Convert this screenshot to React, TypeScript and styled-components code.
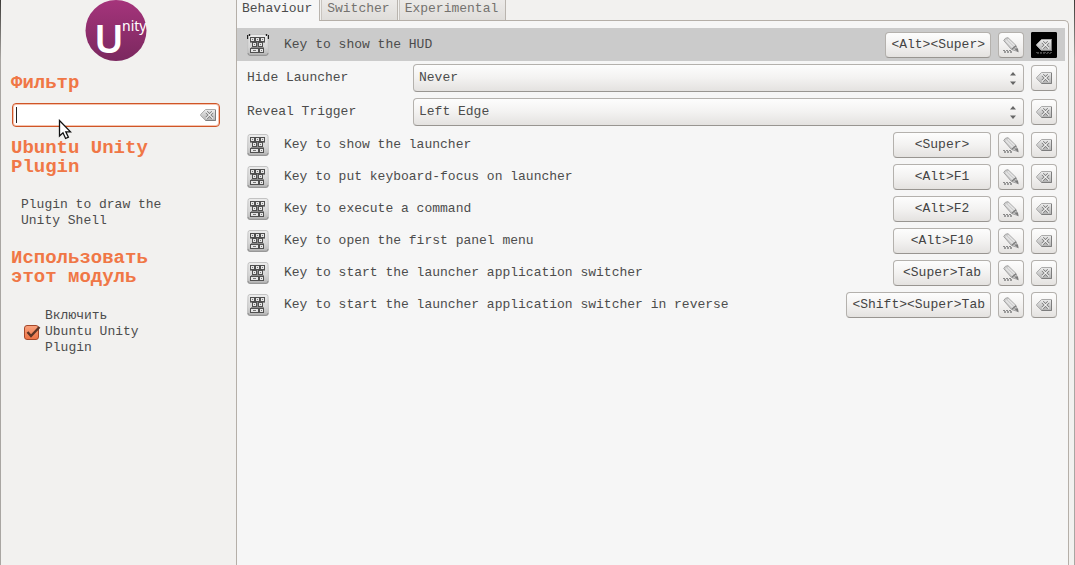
import React, { useState } from "react";
import styled, { createGlobalStyle, css } from "styled-components";

const GlobalStyle = createGlobalStyle`
  * { box-sizing: border-box; }
  html, body { margin: 0; background: #f2f1ef; }
  body, button, input, select {
    font-family: "Liberation Mono", "DejaVu Sans Mono", monospace;
    font-size: 13px;
    line-height: 16px;
    color: #4c4c4c;
  }
`;

const Window = styled.div`
  position: relative;
  display: flex;
  min-height: 100vh;
  border: solid;
  border-width: 0 1px;
  border-image: linear-gradient(#3a3835, #a9a6a2 60px) 1;
  background: #f2f1ef;
  overflow: hidden;
`;

const Sidebar = styled.aside`
  flex: 0 0 235px;
  padding: 0 16px 0 10px;
`;

const Logo = styled.svg`
  display: block;
  margin: 0 auto 13px;
  overflow: visible;
`;

const Heading = styled.h2`
  max-width: 180px;
  margin: 0;
  font-size: 19px;
  line-height: 19px;
  font-weight: bold;
  color: #f07746;
`;

const FilterBox = styled.div`
  display: flex;
  align-items: center;
  height: 24px;
  margin: 10px 0 12px 1px;
  padding: 0 3px;
  border: 1px solid #cf5527;
  border-radius: 4px;
  background: #fff;
  box-shadow: inset 0 0 0 1px #f6c3ae;
`;

const FilterInput = styled.input`
  flex: 1;
  min-width: 0;
  height: 18px;
  padding: 0;
  border: 0;
  outline: none;
  background: transparent;
`;

const Caret = styled.span`
  width: 1px;
  height: 16px;
  background: #222;
`;

const PlainButton = styled.button`
  display: flex;
  padding: 0;
  border: 0;
  background: none;
`;

const Description = styled.p`
  max-width: 160px;
  margin: 20px 0 20px 10px;
`;

const EnableLabel = styled.label`
  display: flex;
  align-items: center;
  gap: 6px;
  max-width: 132px;
  margin: 21px 0 0 13px;
`;

const TickHolder = styled.span`
  position: relative;
  flex: none;
  width: 15px;
  height: 15px;
`;

const TickBox = styled.input`
  appearance: none;
  display: block;
  width: 15px;
  height: 15px;
  margin: 0;
  border: 1px solid #a5482a;
  border-radius: 3px;
  background: linear-gradient(#f9a17c, #ef7446);
  &:not(:checked) + svg { display: none; }
`;

const TickMark = styled.svg`
  position: absolute;
  left: 1px;
  top: 0;
  pointer-events: none;
`;

const Main = styled.main`
  flex: 1;
  min-width: 0;
  display: flex;
  flex-direction: column;
  padding-right: 5px;
`;

const Tabs = styled.div`
  display: flex;
  align-items: flex-start;
  gap: 1px;
  height: 20px;
  border-left: 1px solid #b5afa8;
`;

const Tab = styled.button<{ $active?: boolean }>`
  height: 20px;
  padding: 0 7px 3px 5px;
  border: 0;
  border-right: 1px solid #b9b4ae;
  color: #74726f;
  background: linear-gradient(#eceae8, #dfddda);
  border-left: 1px solid #c9c5c0;
  ${(p) =>
    p.$active &&
    css`
      height: 21px;
      padding-bottom: 4px;
      border-left: 0;
      color: #4c4c4c;
      background: #f6f6f6;
      position: relative;
    `}
`;

const Panel = styled.div`
  flex: 1;
  padding: 7px 3px 0 0;
  border: 1px solid #b5afa8;
  border-bottom: 0;
  border-top-right-radius: 5px;
  background: #f6f6f6;
`;

const Row = styled.div<{ $selected?: boolean }>`
  display: flex;
  align-items: center;
  gap: 7px;
  margin-bottom: 6px;
  padding: 0 8px 0 10px;
  ${(p) =>
    p.$selected &&
    css`
      padding-top: 4px;
      padding-bottom: 3px;
      margin-bottom: 3px;
      background: #cbcbcb;
    `}
`;

const KeyName = styled.span`
  flex: 1;
  padding-left: 8px;
`;

const FieldLabel = styled.label`
  width: 159px;
`;

const raised = css`
  border: 1px solid #b4b1ad;
  border-bottom-color: #989591;
  border-radius: 4px;
  background: linear-gradient(#fdfdfd, #f3f2f1 50%, #e4e2e0);
`;

const KeyButton = styled.button`
  ${raised}
  height: 26px;
  min-width: 98px;
  padding: 0 5px;
  color: #444;
`;

const IconButton = styled.button<{ $pressed?: boolean }>`
  ${raised}
  display: flex;
  align-items: center;
  justify-content: center;
  width: 26px;
  height: 26px;
  padding: 0;
  ${(p) =>
    p.$pressed &&
    css`
      border-color: #000;
      border-radius: 1px;
      background: #000;
    `}
`;

const SelectBox = styled.div`
  position: relative;
  flex: 1;
`;

const Select = styled.select`
  ${raised}
  appearance: none;
  display: block;
  width: 100%;
  height: 28px;
  padding: 0 24px 0 5px;
`;

const Arrows = styled.svg`
  position: absolute;
  right: 8px;
  top: 8px;
  pointer-events: none;
`;

const Pointer = styled.svg`
  position: absolute;
  left: 57px;
  top: 119px;
  pointer-events: none;
`;

const Defs = styled.svg`
  position: absolute;
`;

const IconDefs = () => (
  <Defs width="0" height="0" aria-hidden="true">
    <defs>
      <linearGradient id="metal" x1="0" y1="0" x2="0" y2="1">
        <stop offset="0" stopColor="#ececec" />
        <stop offset="1" stopColor="#b2b2b2" />
      </linearGradient>
      <linearGradient id="keyboard" x1="0" y1="0" x2="0" y2="1">
        <stop offset="0" stopColor="#ededed" />
        <stop offset="0.6" stopColor="#d6d6d6" />
        <stop offset="1" stopColor="#b4b4b4" />
      </linearGradient>
      <linearGradient id="badge" x1="0" y1="0" x2="0" y2="1">
        <stop offset="0" stopColor="#a5347b" />
        <stop offset="1" stopColor="#7b285f" />
      </linearGradient>
    </defs>
  </Defs>
);

const ClearIcon = ({ reflection }: { reflection?: boolean }) => (
  <svg width="16" height="18" viewBox="0 0 16 18" aria-hidden="true">
    <path d="M5.5 3.5H15.5V14.5H5.5L.7 9.6V8.4Z" fill="url(#metal)" stroke="#aaa" />
    <path d="M5.5 14.5H15.5V4" fill="none" stroke="#7d7d7d" />
    <path d="M6.5 6L12.5 12M12.5 6L6.5 12" stroke="#757575" strokeWidth="2.8" />
    <path d="M6 5.5L13 12.5M13 5.5L6 12.5" stroke="#f0f0f0" strokeWidth="1.1" />
    {reflection && (
      <>
        <path d="M0 16.5H16" stroke="#4b4b4b" strokeDasharray="3 1 2 1" />
        <path d="M1 17.5H16" stroke="#3a3a3a" strokeDasharray="2 1" />
      </>
    )}
  </svg>
);

const PencilIcon = () => (
  <svg width="18" height="18" viewBox="0 0 18 18" aria-hidden="true">
    <path d="M1.7 4.5Q3 1.5 6 1.7L14 9.5L16 15.5L9.5 13.5Z" fill="#cdcdcd" stroke="#a3a3a3" />
    <path d="M4 4.5L11.5 12M6 3.2L13 10" stroke="#e6e6e6" strokeWidth="1.2" />
    <path d="M9.8 13.3L14 9.8" stroke="#7c7c7c" strokeWidth="1.4" />
    <path d="M12 12.5L16.5 16.5L16 12.5Z" fill="#7a7a7a" />
    <path d="M1 14.5H10" stroke="#8a8a8a" strokeDasharray="2 1" />
    <path d="M2 15.5H10M2 16.5H11" stroke="#9b9b9b" strokeDasharray="2 1" />
  </svg>
);

const KeyboardIcon = ({ dark }: { dark?: boolean }) => (
  <svg width="22" height="22" viewBox="0 0 22 22" aria-hidden="true">
    <path
      d="M3 .5H19Q21 .5 21 2.5L21.5 19Q21.5 21.5 19.5 21.5H2.5Q.5 21.5 .5 19L1 2.5Q1 .5 3 .5Z"
      fill="url(#keyboard)"
      stroke="#c3c3c3"
    />
    <path d="M1 19Q1 21.3 3 21.3H19Q21 21.3 21 19" fill="none" stroke="#8e8e8e" />
    {dark && <path d="M.5 1V5M2.5 0V2M21.5 1V5M19.5 0V2" stroke="#222" strokeWidth="1.4" />}
    <g fill="#e6e6e6" stroke="#505050">
      <rect x="3.5" y="3.5" width="4" height="4" />
      <rect x="8.5" y="3.5" width="4" height="4" />
      <rect x="13.5" y="3.5" width="4" height="4" />
      <rect x="5.5" y="8.5" width="4" height="4" />
      <rect x="11.5" y="8.5" width="4" height="4" />
      <rect x="3.5" y="14.5" width="8" height="4" />
      <rect x="12.5" y="14.5" width="4" height="4" />
    </g>
    <path d="M3 8.5H5M10.5 8V13M16 8.5H18M4 13.5H17" stroke="#8a8a8a" />
    <path d="M5 5.5H6M10 5.5H11M15 5.5H16M7 10.5H8M13 10.5H14M6 16.5H9M14 16.5H15" stroke="#777" />
  </svg>
);

type Shortcut = { name: string; keys: string; selected?: boolean };

const hudShortcut: Shortcut = {
  name: "Key to show the HUD",
  keys: "<Alt><Super>",
  selected: true,
};

const shortcuts: Shortcut[] = [
  { name: "Key to show the launcher", keys: "<Super>" },
  { name: "Key to put keyboard-focus on launcher", keys: "<Alt>F1" },
  { name: "Key to execute a command", keys: "<Alt>F2" },
  { name: "Key to open the first panel menu", keys: "<Alt>F10" },
  { name: "Key to start the launcher application switcher", keys: "<Super>Tab" },
  {
    name: "Key to start the launcher application switcher in reverse",
    keys: "<Shift><Super>Tab",
  },
];

const ShortcutRow = ({ name, keys, selected }: Shortcut) => (
  <Row $selected={selected}>
    <KeyboardIcon dark={selected} />
    <KeyName>{name}</KeyName>
    <KeyButton type="button">{keys}</KeyButton>
    <IconButton type="button" aria-label={`Edit: ${name}`}>
      <PencilIcon />
    </IconButton>
    <IconButton type="button" $pressed={selected} aria-label={`Reset: ${name}`}>
      <ClearIcon reflection={selected} />
    </IconButton>
  </Row>
);

const ChoiceRow = ({ id, label, options }: { id: string; label: string; options: string[] }) => (
  <Row>
    <FieldLabel htmlFor={id}>{label}</FieldLabel>
    <SelectBox>
      <Select id={id}>
        {options.map((o) => (
          <option key={o}>{o}</option>
        ))}
      </Select>
      <Arrows width="6" height="13" viewBox="0 0 6 13" aria-hidden="true">
        <path d="M0 3.5L3 0L6 3.5ZM0 9.5L3 13L6 9.5Z" fill="#666" />
      </Arrows>
    </SelectBox>
    <IconButton type="button" aria-label={`Reset: ${label}`}>
      <ClearIcon />
    </IconButton>
  </Row>
);

export default function App() {
  const [filter, setFilter] = useState("");
  const [enabled, setEnabled] = useState(true);

  return (
    <>
      <GlobalStyle />
      <IconDefs />
      <Window>
        <Sidebar>
          <Logo width="62" height="61" viewBox="0 0 62 61" role="img" aria-label="Unity">
            <circle cx="31" cy="30.5" r="30.5" fill="url(#badge)" />
            <text x="9" y="53" fontFamily="Noto Sans, sans-serif" fontSize="40" fontWeight="600" fill="#fff">
              U
            </text>
            <text x="37" y="31" fontFamily="Noto Sans, sans-serif" fontSize="14" fill="#fff">
              nity
            </text>
          </Logo>
          <Heading as="label" htmlFor="filter">Фильтр</Heading>
          <FilterBox>
            {filter === "" && <Caret />}
            <FilterInput
              id="filter"
              value={filter}
              onChange={(e) => setFilter(e.target.value)}
            />
            <PlainButton type="button" aria-label="Clear" onClick={() => setFilter("")}>
              <ClearIcon />
            </PlainButton>
          </FilterBox>
          <Heading>Ubuntu Unity Plugin</Heading>
          <Description>Plugin to draw the Unity Shell</Description>
          <Heading>Использовать этот модуль</Heading>
          <EnableLabel>
            <TickHolder>
              <TickBox
                type="checkbox"
                checked={enabled}
                onChange={(e) => setEnabled(e.target.checked)}
              />
              <TickMark width="16" height="15" viewBox="0 0 16 15" aria-hidden="true">
                <path d="M2.5 7L6 11L14.5 2" fill="none" stroke="#5d3527" strokeWidth="2.4" />
              </TickMark>
            </TickHolder>
            <span>Включить Ubuntu Unity Plugin</span>
          </EnableLabel>
        </Sidebar>
        <Main>
          <Tabs role="tablist">
            <Tab type="button" role="tab" aria-selected="true" $active>Behaviour</Tab>
            <Tab type="button" role="tab" aria-selected="false">Switcher</Tab>
            <Tab type="button" role="tab" aria-selected="false">Experimental</Tab>
          </Tabs>
          <Panel>
            <ShortcutRow {...hudShortcut} />
            <ChoiceRow id="hide" label="Hide Launcher" options={["Never", "Autohide"]} />
            <ChoiceRow id="reveal" label="Reveal Trigger" options={["Left Edge", "Top Left Corner"]} />
            {shortcuts.map((s) => (
              <ShortcutRow key={s.name} {...s} />
            ))}
          </Panel>
        </Main>
        <Pointer width="14" height="21" viewBox="0 0 14 21" aria-hidden="true">
          <path
            d="M1.5 1.5V17L5 13.8L7.6 19.5L10.4 18.2L7.8 12.8H12.5Z"
            fill="#fff"
            stroke="#111"
            strokeWidth="1.3"
          />
        </Pointer>
      </Window>
    </>
  );
}
